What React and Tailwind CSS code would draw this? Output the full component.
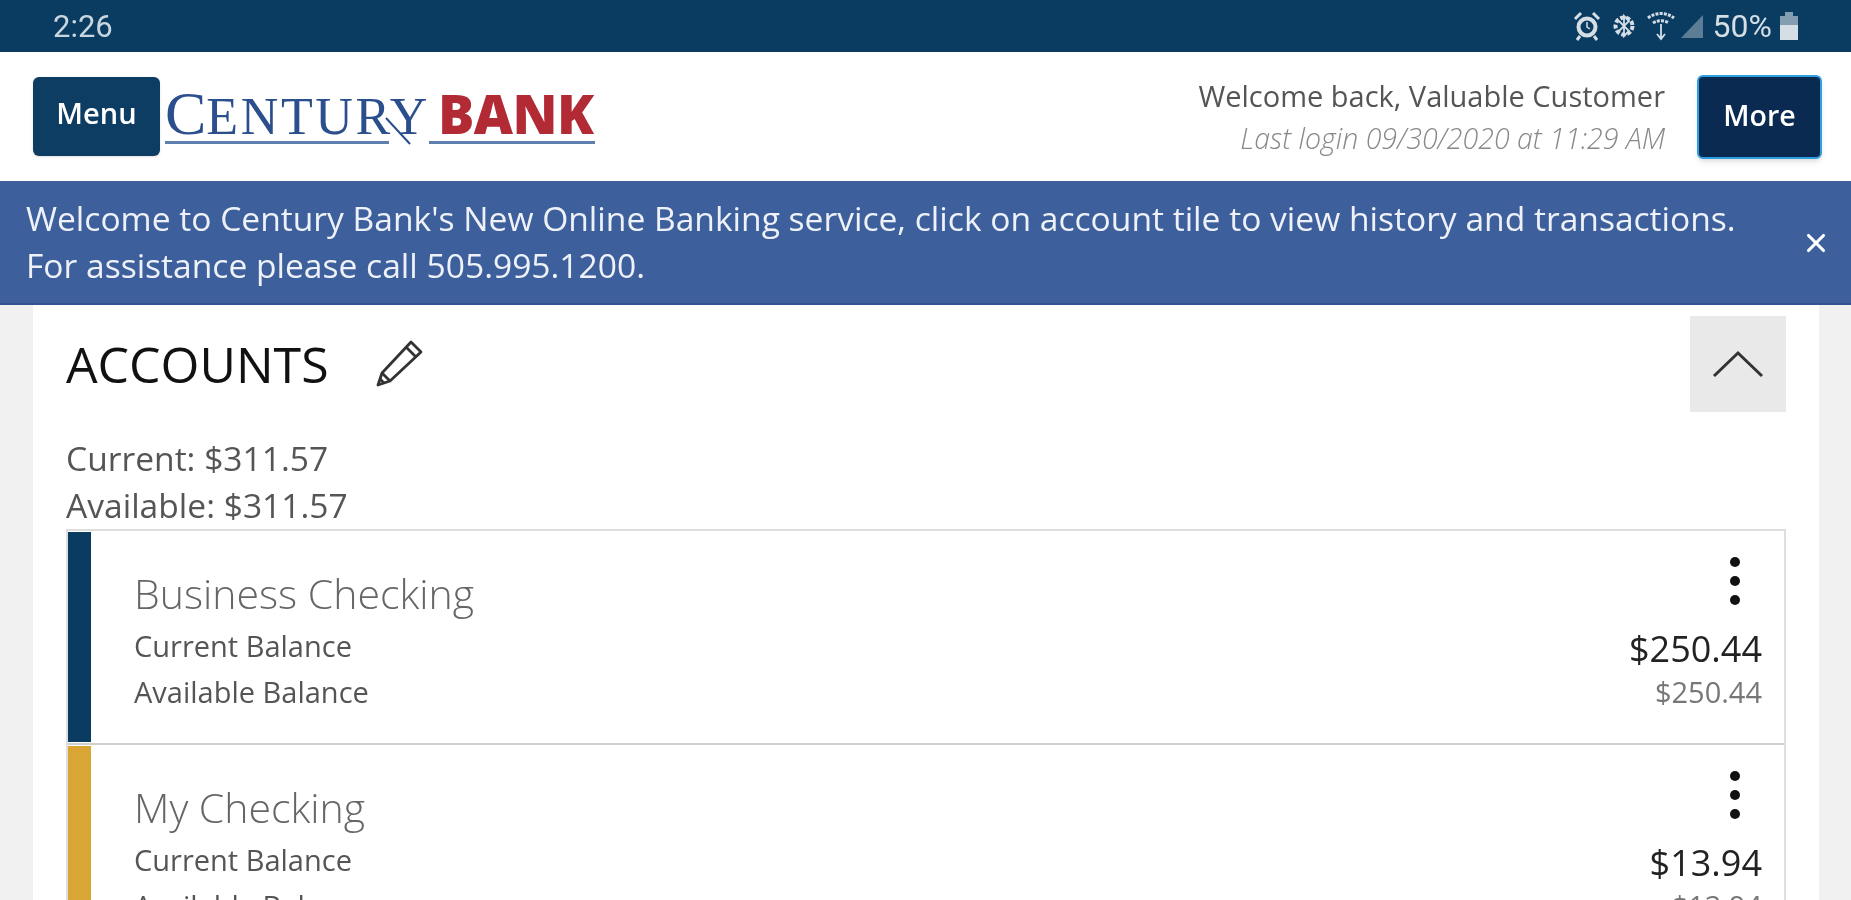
import React from 'react';
import { X } from 'lucide-react';

const sans = "font-['Open_Sans',sans-serif]";

function StatusIcons() {
  return (
    <div className="flex items-center text-[#d5dee5]">
      {/* alarm */}
      <svg width="28" height="30" viewBox="0 0 28 30" fill="none" stroke="currentColor">
        <circle cx="14" cy="16" r="8.5" strokeWidth="4" />
        <path d="M14 11v5l3 2" strokeWidth="1.5" />
        <path d="M2 8l6-6M26 8l-6-6M7 25l-3 4M21 25l3 4" strokeWidth="3" />
      </svg>
      {/* bluetooth, inside a ring */}
      <svg width="26" height="30" viewBox="0 0 26 30" fill="none" stroke="currentColor" className="ml-[10px]">
        <circle cx="13" cy="15" r="8.5" strokeWidth="4" strokeDasharray="4 2" />
        <path d="M8 10l10 10-5 5V5l5 5-10 10" strokeWidth="1.8" />
      </svg>
      {/* wifi */}
      <svg width="30" height="30" viewBox="0 0 30 30" fill="none" stroke="currentColor" className="ml-[9px]">
        <path d="M2 7c8-6 18-6 26 0M7 12c5-3 11-3 16 0" strokeWidth="3" strokeDasharray="3 1.2" />
        <path d="M15 13v15M11 23l4 5 4-5" strokeWidth="1.8" />
      </svg>
      {/* signal */}
      <svg width="26" height="26" viewBox="0 0 26 26" fill="currentColor" className="ml-[3px] opacity-40">
        <path d="M2 25L24 2v23z" />
      </svg>
      <span className="ml-[8px] font-['Roboto',sans-serif] text-[32px] leading-none">50%</span>
      {/* battery */}
      <svg width="20" height="30" viewBox="0 0 20 30" fill="currentColor" className="ml-[7px]">
        <path d="M6 1h8v4h5v24H1V5h5z" opacity="0.6" />
        <path d="M1 14h18v15H1z" />
      </svg>
    </div>
  );
}

function AccountRow({ name, current, available, barColor }) {
  return (
    <div className="flex h-[214px] shrink-0 border-b-2 border-[#cfcfcf]">
      <div className={`w-[23px] shrink-0 my-px ${barColor}`} />
      <div className="flex-1 pl-[43px] pr-[22px] flex justify-between">
        <div className="pt-[36px]">
          <div className="text-[41px] leading-[52px] font-light text-[#666666]">{name}</div>
          <div className="mt-[4px] text-[29px] leading-[46px] text-[#555555]">Current Balance</div>
          <div className="text-[29px] leading-[46px] text-[#555555]">Available Balance</div>
        </div>
        <div className="flex flex-col items-end pt-[26px]">
          <div className="flex flex-col gap-[9px] pr-[22px]">
            <span className="w-[10px] h-[10px] rounded-full bg-[#111111]" />
            <span className="w-[10px] h-[10px] rounded-full bg-[#111111]" />
            <span className="w-[10px] h-[10px] rounded-full bg-[#111111]" />
          </div>
          <div className="mt-[22px] text-[36px] leading-[44px] text-[#222222]">{current}</div>
          <div className="text-[29px] leading-[42px] text-[#777777]">{available}</div>
        </div>
      </div>
    </div>
  );
}

export default function App() {
  return (
    <div className={`h-[900px] w-full overflow-hidden bg-[#f1f1f1] flex flex-col blur-[0.6px] ${sans}`}>
      {/* Phone status bar */}
      <div className="h-[52px] shrink-0 bg-[#0a3c62] flex items-center justify-between pl-[53px] pr-[52px]">
        <span className="font-['Roboto',sans-serif] text-[31px] leading-none text-[#c9d6df]">2:26</span>
        <StatusIcons />
      </div>

      {/* Header */}
      <header className="h-[129px] shrink-0 bg-white flex items-center justify-between pl-[33px] pr-[29px]">
        <div className="flex items-center">
          <button className="w-[127px] h-[79px] pb-[7px] rounded-[6px] bg-[#0e3d64] text-white text-[29px] font-semibold shadow-sm">
            Menu
          </button>
          <div className="relative ml-[5px] w-[430px]">
            <div className="flex items-baseline h-[46px]">
              <span className="font-['Liberation_Serif',serif] text-[62px] leading-[46px] text-[#2b4f8c]">C</span>
              <span className="font-['Liberation_Serif',serif] text-[52px] leading-[46px] tracking-[2.6px] text-[#2b4f8c]">
                ENTURY
              </span>
              <span className="ml-[8px] font-extrabold text-[54px] leading-[46px] tracking-[-0.5px] text-[#b22a33]">
                BANK
              </span>
            </div>
            <div className="mt-[5px] flex justify-between">
              <div className="h-[3px] w-[224px] bg-[#5f7fb0]" />
              <div className="h-[3px] w-[166px] bg-[#5f7fb0]" />
            </div>
            {/* long leg of the R */}
            <svg width="30" height="30" viewBox="0 0 30 30" className="absolute left-[218px] top-[26px]" fill="none" stroke="#2b4f8c" strokeWidth="2">
              <path d="M3 2l24 26" />
            </svg>
          </div>
        </div>
        <div className="flex items-center">
          <div className="text-right mr-[32px]">
            <div className="text-[29px] leading-[42px] text-[#555555]">Welcome back, Valuable Customer</div>
            <div className="text-[28.5px] leading-[42px] font-light italic text-[#888888]">
              Last login 09/30/2020 at 11:29 AM
            </div>
          </div>
          <button className="w-[125px] h-[84px] pb-[3px] rounded-[6px] bg-[#0b2a52] border-2 border-[#2e9fe0] text-white text-[28.5px] font-semibold shadow-md">
            More
          </button>
        </div>
      </header>

      {/* Notice banner */}
      <div className="h-[124px] shrink-0 bg-[#3d5f9b] border-b-2 border-[#34548f] flex items-center justify-between pl-[26px] pr-[20px] text-white">
        <p className="text-[33.6px] leading-[47px] text-[#eef2f8]">
          Welcome to Century Bank's New Online Banking service, click on account tile to view history and transactions.
          <br />
          For assistance please call 505.995.1200.
        </p>
        <X className="w-[30px] h-[30px] mt-[2px]" strokeWidth={2.5} />
      </div>

      {/* Accounts card */}
      <main className="flex-1 min-h-0 ml-[33px] mr-[32px] bg-white pl-[33px] pr-[33px] pt-[11px]">
        <div className="flex justify-between">
          <div className="flex items-center h-[96px]">
            <h1 className="text-[50px] leading-none text-[#111111]">ACCOUNTS</h1>
            <svg width="50" height="50" viewBox="0 0 50 50" fill="none" stroke="#333333" strokeWidth="2.8" strokeLinejoin="round" className="ml-[46px] -mt-[2px]">
              <path d="M36 4l10 10L15 43 3 47l4-12z" />
              <path d="M31 9l10 10M7 35l8 8M5 41l4 4" />
            </svg>
          </div>
          <button className="w-[96px] h-[96px] bg-[#e9e9e9] flex items-center justify-center">
            <svg width="52" height="28" viewBox="0 0 52 28" fill="none" stroke="#333333" strokeWidth="3">
              <path d="M2 26L26 3l24 23" />
            </svg>
          </button>
        </div>
        <div className="mt-[23px] text-[33.6px] leading-[47px] text-[#555555]">
          <div>Current: $311.57</div>
          <div>Available: $311.57</div>
        </div>
        <div className="border-t-2 border-x-2 border-[#dedede] flex flex-col">
          <AccountRow name="Business Checking" current="$250.44" available="$250.44" barColor="bg-[#0a3c62]" />
          <AccountRow name="My Checking" current="$13.94" available="$13.94" barColor="bg-[#d9a636]" />
        </div>
      </main>
    </div>
  );
}
